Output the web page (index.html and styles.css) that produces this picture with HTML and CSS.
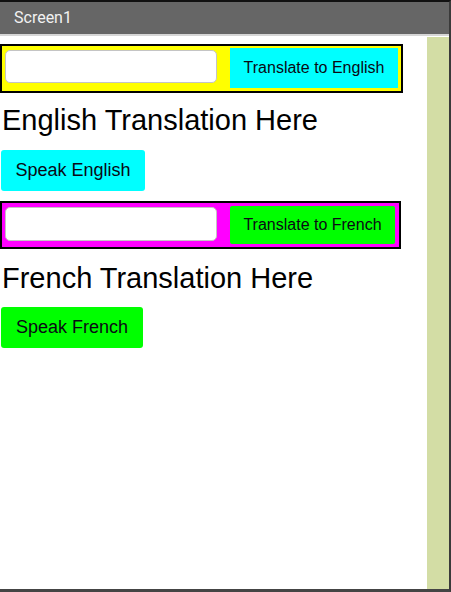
FILE: index.html
```html
<!DOCTYPE html>
<html>
<head>
<meta charset="utf-8">
<title>Screen1</title>
<link rel="stylesheet" href="styles.css">
</head>
<body>
<div class="device">
  <div class="titlebar">Screen1</div>
  <div class="divider"></div>
  <div class="main">
    <div class="content">
      <div class="row row-en">
        <div class="textbox tb-en"></div>
        <div class="btn btn-translate-en">Translate to English</div>
      </div>
      <div class="label label-en">English Translation Here</div>
      <div class="btn btn-speak btn-speak-en">Speak English</div>
      <div class="row row-fr">
        <div class="textbox tb-fr"></div>
        <div class="btn btn-translate-fr">Translate to French</div>
      </div>
      <div class="label label-fr">French Translation Here</div>
      <div class="btn btn-speak btn-speak-fr">Speak French</div>
    </div>
    <div class="sidebar"></div>
  </div>
</div>
</body>
</html>
```
FILE: styles.css
```css
html, body {
  margin: 0;
  padding: 0;
  background: #ffffff;
}
.device {
  width: 451px;
  height: 592px;
  box-sizing: border-box;
  border-top: 2px solid #111111;
  border-right: 2px solid #3a3a3a;
  border-bottom: 3px solid #444444;
  display: flex;
  flex-direction: column;
  font-family: "Liberation Sans", Arial, sans-serif;
  color: #000000;
  overflow: hidden;
}
.titlebar {
  height: 32px;
  flex: none;
  background: #666666;
  color: #f2f2f2;
  font-family: Roboto, "Liberation Sans", sans-serif;
  font-size: 16px;
  line-height: 32px;
  padding-left: 14px;
}
.divider {
  height: 2px;
  flex: none;
  background: #d6d6d6;
}
.main {
  flex: 1;
  display: flex;
  min-height: 0;
}
.content {
  flex: 1;
  background: #ffffff;
  padding-top: 8px;
}
.sidebar {
  width: 22px;
  flex: none;
  background: #d3dda5;
  margin-top: 1px;
}
.row {
  box-sizing: border-box;
  border: 2px solid #000000;
  display: flex;
  align-items: flex-start;
}
.row-en {
  width: 403px;
  height: 49px;
  background: #ffff00;
}
.row-fr {
  width: 401px;
  height: 48px;
  margin-top: 10px;
  background: #ff00ff;
}
.textbox {
  box-sizing: border-box;
  width: 212px;
  background: #ffffff;
  border: 1.5px solid #c4c4c4;
  border-radius: 5px;
  margin-left: 3px;
  flex: none;
}
.tb-en {
  height: 33px;
  margin-top: 4px;
}
.tb-fr {
  height: 34px;
  margin-top: 4px;
}
.btn {
  display: flex;
  align-items: center;
  justify-content: center;
  color: #0a0a14;
  flex: none;
}
.btn-translate-en {
  width: 168px;
  height: 40px;
  margin-left: 13px;
  margin-top: 2px;
  background: #00ffff;
  font-size: 16px;
}
.btn-translate-fr {
  width: 165px;
  height: 38px;
  margin-left: 13px;
  margin-top: 3px;
  background: #00ff00;
  border-radius: 2px;
  font-size: 16px;
}
.label {
  font-size: 29px;
  line-height: 32px;
  white-space: nowrap;
  padding-left: 2px;
}
.label-en {
  margin-top: 11px;
}
.label-fr {
  margin-top: 13px;
}
.btn-speak {
  height: 41px;
  margin-left: 1px;
  border-radius: 3px;
  font-size: 18px;
}
.btn-speak-en {
  width: 144px;
  margin-top: 14px;
  background: #00ffff;
}
.btn-speak-fr {
  width: 142px;
  margin-top: 13px;
  background: #00ff00;
}
```
